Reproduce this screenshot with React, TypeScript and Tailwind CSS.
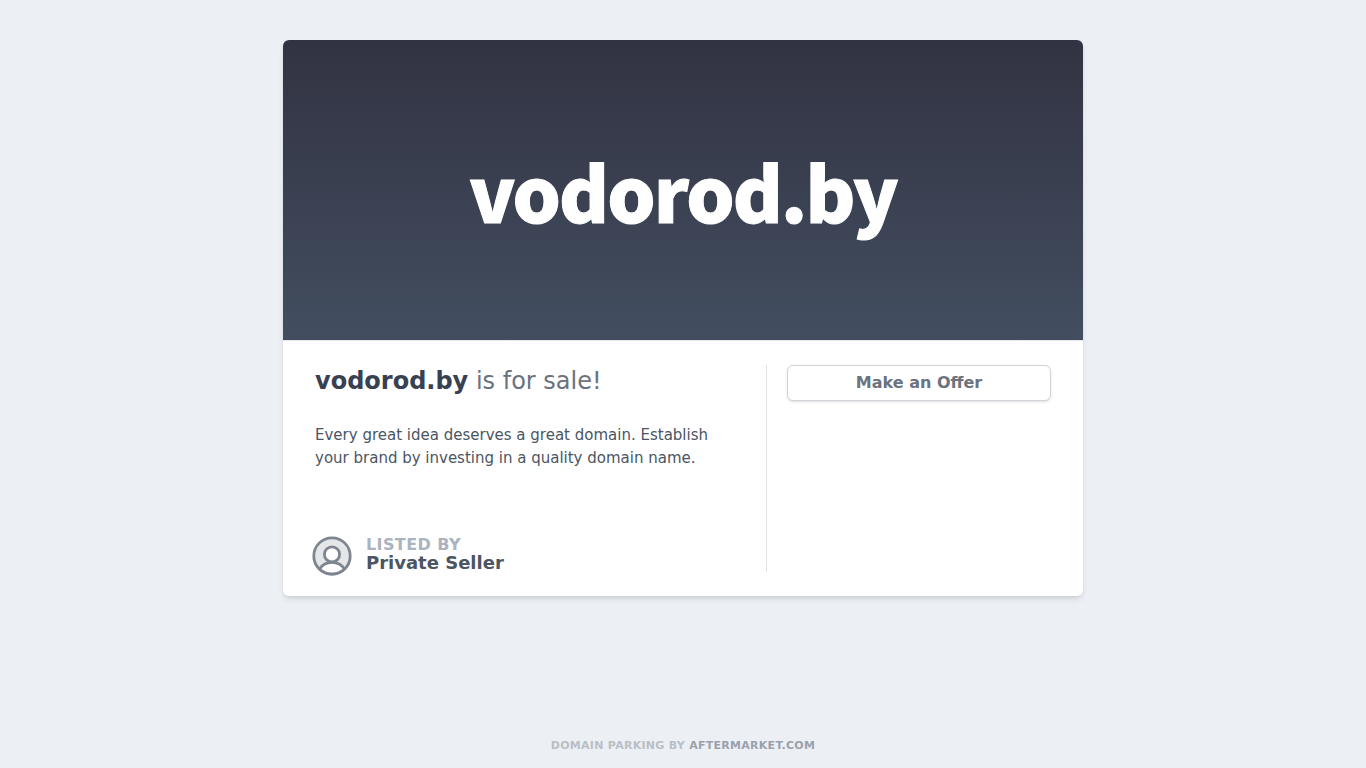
const domain = 'vodorod.by';

function SellerAvatar() {
  return (
    <svg className="h-10 w-10 shrink-0" viewBox="0 0 40 40" fill="none" stroke="#7f8590" strokeWidth="2.8" aria-hidden="true">
      <circle cx="20" cy="20" r="18.2" fill="#e4e6e8" stroke="none" />
      <path d="M7.4 33.1C10 29.2 14.5 26.4 20 26.4s10 2.8 12.6 6.7A18.2 18.2 0 0 1 7.4 33.1z" fill="#fff" />
      <circle cx="20" cy="20" r="18.2" />
      <circle cx="20" cy="18.4" r="7.6" fill="#fff" />
    </svg>
  );
}

function Hero() {
  return (
    <header className="flex h-75 items-center justify-center bg-linear-to-b from-[#323342] to-[#424e60]">
      <h1 className="font-['Noto_Sans_CJK_JP',sans-serif] text-[76px] leading-none font-black tracking-tight text-white [-webkit-text-stroke:1px_white]">
        {domain}
      </h1>
    </header>
  );
}

function Seller() {
  return (
    <div className="-mb-1 -ml-[3px] flex items-start gap-3.5">
      <SellerAvatar />
      <div className="font-semibold">
        <p className="text-base leading-[18px] tracking-wide text-[#abb3c0]">LISTED BY</p>
        <p className="text-lg leading-[18px] text-[#4b5563]">Private Seller</p>
      </div>
    </div>
  );
}

export default function App() {
  return (
    <div className="flex min-h-screen flex-col items-center bg-[#ecf0f5] px-4 pt-10 font-['DejaVu_Sans',sans-serif]">
      <main className="w-full max-w-[800px] overflow-hidden rounded-md bg-white shadow-md">
        <Hero />
        <div className="flex border-t border-[#e5e7eb] px-8 py-6">
          <section className="flex min-h-[207px] flex-1 flex-col justify-between border-r border-[#e0e2e7] pr-10">
            <div>
              <h2 className="text-2xl text-[#6b7280]">
                <strong className="font-bold text-[#374151]">{domain}</strong> is for sale!
              </h2>
              <p className="mt-[27px] text-[15px] leading-[23px] text-[#4b5563]">
                Every great idea deserves a great domain. Establish your brand by investing in a quality domain name.
              </p>
            </div>
            <Seller />
          </section>
          <aside className="w-[284px] pl-5">
            <button type="button" className="h-9 w-full rounded-md border border-[#d2d4dc] bg-white font-semibold text-[#6b7280] shadow-sm">
              Make an Offer
            </button>
          </aside>
        </div>
      </main>
      <footer className="mt-auto pb-3.5 text-[11px] leading-4 font-bold tracking-wide text-[#b9bfc6]">
        DOMAIN PARKING BY <a href="#" className="text-[#9aa1ac]">AFTERMARKET.COM</a>
      </footer>
    </div>
  );
}
